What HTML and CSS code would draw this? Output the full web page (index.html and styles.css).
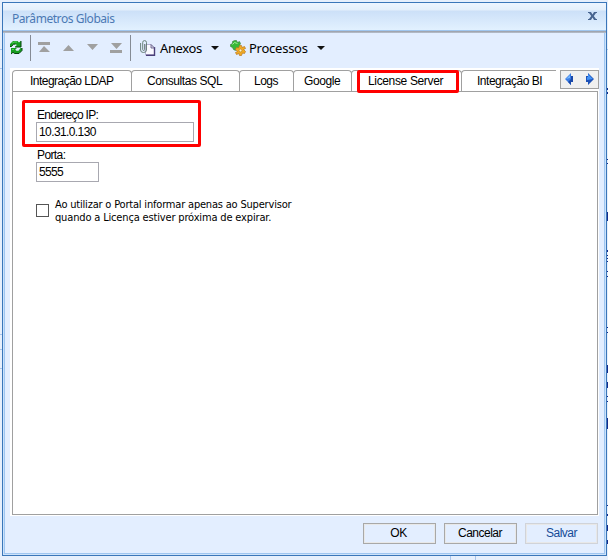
FILE: index.html
```html
<!DOCTYPE html>
<html lang="pt-BR">
<head>
<meta charset="utf-8">
<title>Parâmetros Globais</title>
<link rel="stylesheet" href="styles.css">
</head>
<body>
<div class="desk">
  <svg class="desk-art" width="608" height="560" viewBox="0 0 608 560" shape-rendering="crispEdges">
    <path d="M0 49.5H2M0 68.5H2M0 334.5H2M0 349.5H2M0 368.5H2M606 49.5H608M450.5 556V560M475.5 556V560" stroke="#a9c4ea"/>
    <path d="M607.5 88V90M607.5 92V94M607.5 159V160M607.5 163V164M607.5 212V221M607.5 250V252M607.5 255V256M607.5 258V259M607.5 261V262M607.5 271V272M607.5 276V277M607.5 327V328M607.5 332V333M607.5 365V373M607.5 382V388M607.5 396V397M607.5 401V402M607.5 418V429M607.5 505V506M607.5 514V516M607.5 525V531M607.5 540V544" stroke="#142b8c"/>
  </svg>
  <main class="window">
    <header class="titlebar">
      <h1 class="title">Parâmetros Globais</h1>
      <svg class="close" width="9" height="8" viewBox="0 0 9 8"><path d="M0 0H3L4.5 2.4L6 0H9V1H8L5.8 4L8 7H9V8H6L4.500 5.600L3 8H0V7H1L3.200 4L1 1H0Z" fill="#46638f"/></svg>
    </header>
    <div class="toolbar">
      <svg class="refresh" width="14" height="15" viewBox="0 0 14 15">
        <path d="M1 6.500V4L4 1H8.500L10 2.500L12 .8V7H6L7.800 5L6.500 4H4.500L2.500 6.500Z" fill="#169d20"/>
        <path d="M1 6.500H2.500L4.500 4.200H6.500M6 7H12V1" fill="none" stroke="#06440d"/>
        <path d="M13 8V10.500L10 13.500H5.500L4 12.200L2 14V8H8L6.200 9.800L7.500 10.800H9.500L11.500 8Z" fill="#169d20"/>
        <path d="M13 8V10.500L10 13.500H5.500L4 12.300L2 14" fill="none" stroke="#06440d"/>
        <path d="M3 3.200L5 2H8M3 9.500H5" fill="none" stroke="#54d35a"/>
      </svg>
      <i class="sep sep-one"></i>
      <svg class="nav" width="85" height="11" viewBox="0 0 85 11" fill="#a0a0a0">
        <path d="M0 0H12V3H0ZM1 10L6 4L12 10ZM25 9L30.500 3L36 9ZM49 2H60L54.500 8ZM73 1H84L78.500 7ZM72 8H84V11H72Z"/>
      </svg>
      <i class="sep sep-two"></i>
      <svg class="attach" width="16" height="16" viewBox="0 0 16 16">
        <path d="M5.500 4.500H11L14.500 8V15H5.500Z" fill="#faf9ff" stroke="#b9b5d6"/>
        <path d="M14.500 7V15.300H6" fill="none" stroke="#4a3f78" stroke-width="1.400"/>
        <path d="M11 4.500V8H14.500Z" fill="#dedbec" stroke="#57517d" stroke-width=".8"/>
        <path d="M.6 3V10Q.6 12.500 3.500 12.500Q6.500 12.500 6.500 10V2.500Q6.500.6 4.500.6Q2.700.6 2.700 2.500V9.500Q2.700 10.500 3.700 10.500Q4.600 10.500 4.600 9.500V4" fill="none" stroke="#5d776c" stroke-width=".9"/>
      </svg>
      <span class="command attachments">Anexos</span>
      <i class="arrow arrow-one"></i>
      <svg class="gears" width="16" height="16" viewBox="0 0 16 16">
        <g transform="translate(5.500 5.500)"><path d="M-1-5H1L2-3L4-4L5-2L4 0L5 2L3 4L1 3L0 5L-2 4L-3 2L-5 1L-5-1L-3-2L-3-4Z" fill="#38b838" stroke="#39793a" stroke-width=".6"/><path d="M-3-1L-1-3L2-2" fill="none" stroke="#a3ef9a"/></g>
        <g transform="translate(10.500 10.500)"><path d="M-1-5H1L1.500-3L4-4L5-2L3-1L5 1L4 3L2 2.500L1 5H-1L-1.500 3L-4 4L-5 2L-3 1L-5-1L-4-3L-2-2.500Z" fill="#f1aa24" stroke="#b87520" stroke-width=".7"/><circle r="1.400" fill="#fff5cb" stroke="#ac731d" stroke-width=".6"/></g>
      </svg>
      <span class="command processes">Processos</span>
      <i class="arrow arrow-two"></i>
    </div>
    <section class="tabs">
      <nav class="tabstrip">
        <div class="tab ldap"><span>Integração LDAP</span></div>
        <div class="tab sql"><span>Consultas SQL</span></div>
        <div class="tab logs"><span>Logs</span></div>
        <div class="tab google"><span>Google</span></div>
        <div class="tab license"><span>License Server</span><i class="tab-highlight"></i></div>
        <div class="tab bi"><span>Integração BI</span></div>
        <div class="scroller">
          <svg width="36" height="17" viewBox="0 0 36 17"><path d="M4 8L10 2V5H12V11H10V14Z" fill="#397be3"/><path d="M10 2V5H12V11H10V14L7 11L10 8Z" fill="#1948a9"/><path d="M5 8L9 4V7Z" fill="#75b7ff"/><path d="M33 8L27 2V5H25V11H27V14Z" fill="#1d51b7"/><path d="M32 8L27 3V6H26V9Z" fill="#4292f5"/></svg>
        </div>
      </nav>
      <div class="panel">
        <div class="ip-box">
          <label for="ip">Endereço IP:</label>
          <div class="field ip" id="ip"><span>10.31.0.130</span></div>
        </div>
        <div class="port-group">
          <label class="port-label">Porta:</label>
          <div class="field port"><span>5555</span></div>
        </div>
        <div class="option">
          <i class="checkbox"></i>
          <div class="option-text"><span class="line-one">Ao utilizar o Portal informar apenas ao Supervisor</span><span class="line-two">quando a Licença estiver próxima de expirar.</span></div>
        </div>
      </div>
    </section>
    <footer class="actions">
      <div class="button"><span class="ok">OK</span></div>
      <div class="button"><span class="cancel">Cancelar</span></div>
      <div class="button disabled"><span class="save">Salvar</span></div>
    </footer>
  </main>
</div>
</body>
</html>
```
FILE: styles.css
```css
* { box-sizing: border-box; }
body { margin: 0; overflow: hidden; font: 12px "Liberation Sans", sans-serif; color: #000; }
svg, i { display: block; flex: none; }
span { white-space: nowrap; }
.desk { width: 608px; height: 560px; padding: 2px; background: #e6effc; position: relative; }
.desk-art { position: absolute; left: 0; top: 0; }
.window { position: relative; width: 605px; height: 554px; border: 1px solid #3a76b9; background: #e3eeff; box-shadow: inset 1px 0 #cce2fa, inset -1px -1px #cce2fa, inset 2px 0 #9fc6f1, inset -2px -2px #9fc6f1; }
.titlebar { height: 30px; display: flex; justify-content: space-between; padding: 9px 9px 0; background: linear-gradient(#edf5ff 0, #e4effb 7px, #cce0f8 8px, #e2f1ff 27px, #a0c6ef 27px, #a0c6ef 28px, #999ca4 28px, #b8c2d1 30px); }
.title { margin: -2px 0 0; font: 12px/17px "Noto Sans", sans-serif; letter-spacing: -.45px; color: #4b79b4; }
.close { margin-top: 0; }
.toolbar { height: 35px; padding: 0 6px; display: flex; align-items: flex-start; }
.refresh { margin-top: 7px; }
.sep { width: 1px; height: 26px; background: #858b95; margin-top: 2px; }
.sep-one { margin-left: 7px; }
.nav { margin: 9px 0 0 7px; }
.sep-two { margin-left: 7px; }
.attach { margin: 7px 0 0 9px; }
.command { font: 13px/18px "Noto Sans", sans-serif; margin-top: 6px; }
.attachments { width: 43px; margin-left: 4px; letter-spacing: -.4px; }
.arrow { border: 4px solid transparent; border-top-color: #111; border-bottom: 0; margin-top: 13px; }
.arrow-one { margin-left: 8px; }
.gears { margin: 7px 0 0 11px; }
.processes { width: 60px; margin-left: 3px; letter-spacing: -.25px; }
.arrow-two { margin-left: 8px; }
.tabs { margin: 0 5px 0 7px; width: 589px; height: 448px; padding: 2px; background: #fff; }
.tabstrip { display: flex; height: 21px; }
.tab { flex: none; position: relative; height: 21px; margin-right: -1px; border: 1px solid #a0a0a0; border-bottom: 0; border-radius: 4px 4px 0 0; line-height: 20px; }
.tab span { display: block; }
.ldap { width: 120px; padding-left: 17px; letter-spacing: -.52px; }
.sql { width: 109px; padding-left: 15px; letter-spacing: -.42px; }
.logs { width: 55px; padding-left: 14px; letter-spacing: -.5px; }
.google { width: 59px; padding-left: 10px; letter-spacing: -.42px; }
.license { width: 111px; padding-left: 16px; letter-spacing: -.35px; }
.bi { width: 95px; padding-left: 15px; letter-spacing: -.48px; border-right: 0; border-top-right-radius: 0; }
.tab-highlight { position: absolute; left: 5px; top: -1px; width: 102px; height: 23px; border: 3px solid #f00; border-radius: 2px; z-index: 2; }
.scroller { flex: none; width: 39px; height: 19px; margin: 0 0 0 5px; border: 1px solid #a0a0a0; background: #f0f0f0; }
.panel { width: 586px; height: 424px; border: 1px solid #a0a0a0; padding: 8px 9px; }
.ip-box { width: 179px; height: 47px; border: 3px solid #f00; border-radius: 2px; padding: 5px 4px 0 11px; }
label { display: block; height: 14px; line-height: 14px; padding-left: 1px; letter-spacing: -.68px; }
.port-label { letter-spacing: -.6px; }
.field { height: 20px; border: 1px solid #a8a8b0; padding-left: 2px; line-height: 18px; }
.ip { width: 158px; letter-spacing: -.6px; }
.port-group { margin: 1px 0 0 14px; }
.port { width: 63px; letter-spacing: -.7px; }
.option { display: flex; margin: 16px 0 0 14px; }
.checkbox { width: 13px; height: 13px; margin-top: 6px; border: 1px solid #555; }
.option-text { margin-left: 6px; font: 11px/13px "DejaVu Sans", sans-serif; font-stretch: condensed; }
.option-text span { display: block; }
.line-one { letter-spacing: -.19px; }
.line-two { letter-spacing: -.16px; }
.actions { display: flex; gap: 8px; justify-content: flex-end; padding: 7px 8px 0; }
.button { width: 73px; height: 21px; border: 1px solid #a8a8a8; box-shadow: inset 0 0 0 1px #e8e8e8; display: flex; justify-content: center; line-height: 19px; letter-spacing: -.5px; }
.ok { transform: translateX(-1px); }
.cancel { transform: translateX(-.5px); }
.disabled { border-color: #d0d3d9; color: #164b98; }
```
